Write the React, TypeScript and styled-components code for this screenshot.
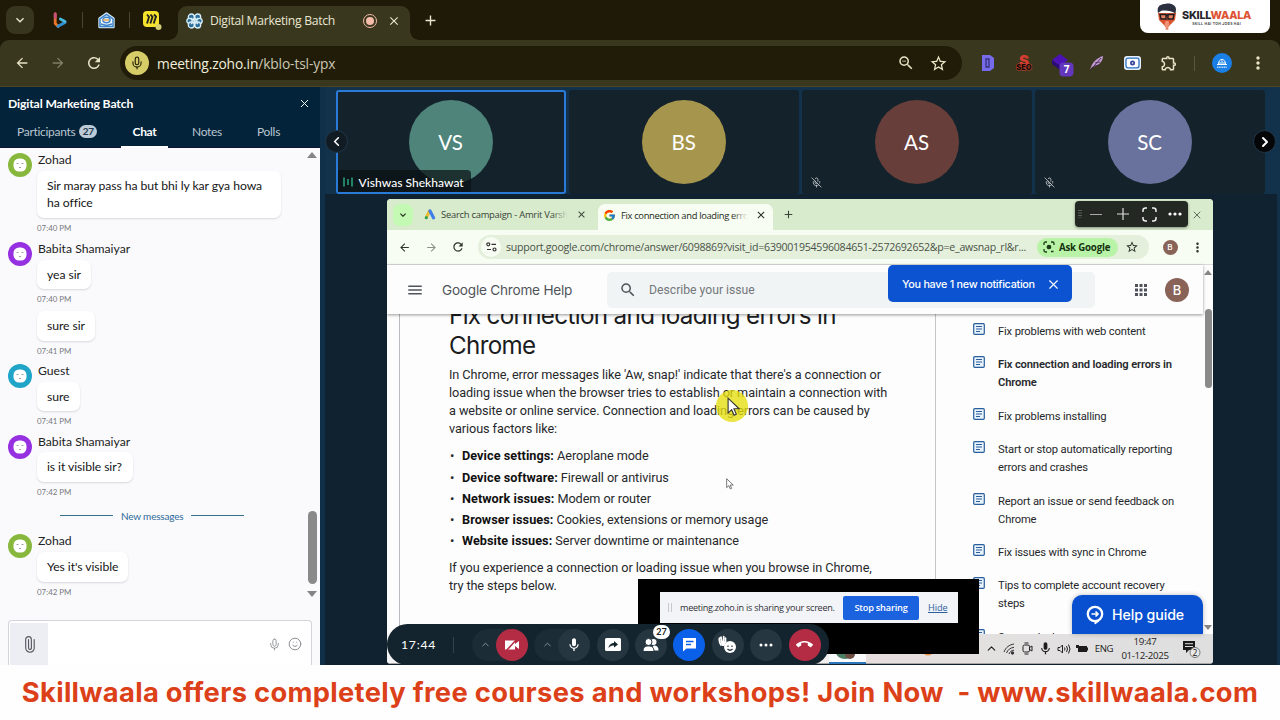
import React from "react";
import styled, { createGlobalStyle } from "styled-components";
import {
  MdMic, MdStarBorder, MdCallEnd, MdMoreVert, MdClose, MdAdd, MdRefresh, MdArrowBack,
  MdArrowForward, MdZoomOut, MdOutlineExtension, MdMenu, MdSearch, MdApps, MdExpandMore,
} from "react-icons/md";
import { FcGoogle } from "react-icons/fc";
import { Mic, MicOff, Smile, Paperclip, X, ChevronLeft, ChevronRight, ChevronUp } from "lucide-react";

const Global = createGlobalStyle`
  * { box-sizing: border-box; }
  body { margin: 0; overflow: hidden; background: #fff; }
  svg { display: block; flex: none; }
`;

const ui = `"Open Sans", "Noto Sans", sans-serif`;
const lato = `Lato, "Open Sans", sans-serif`;
const inter = `Inter, Roboto, sans-serif`;
const roboto = `Roboto, Inter, sans-serif`;

const Page = styled.div`
  position: relative;
  width: 1280px;
  height: 720px;
  display: flex;
  flex-direction: column;
  overflow: hidden;
  font-family: ${lato};
  background: #fff;
`;

const Slot = styled.div<{ $w: number; $ml?: number; $start?: boolean }>`
  flex: none;
  width: ${(p) => p.$w}px;
  margin-left: ${(p) => p.$ml ?? 0}px;
  display: flex;
  align-items: center;
  justify-content: ${(p) => (p.$start ? "flex-start" : "center")};
`;

const Label = styled.span<{ $size: number; $ls?: number; $weight?: number; $color?: string; $font?: string }>`
  font-family: ${(p) => p.$font ?? ui};
  font-size: ${(p) => p.$size}px;
  letter-spacing: ${(p) => p.$ls ?? 0}px;
  font-weight: ${(p) => p.$weight ?? 400};
  color: ${(p) => p.$color ?? "inherit"};
  white-space: nowrap;
`;

/* ---------- outer browser ---------- */
const TabStrip = styled.header`
  height: 40px;
  flex: none;
  display: flex;
  align-items: center;
  background: #1e1a07;
  color: #e9e6d0;
`;
const TabMenu = styled.div`
  width: 28px;
  height: 28px;
  margin-left: 6px;
  border-radius: 9px;
  background: #38351f;
  display: flex;
  align-items: center;
  justify-content: center;
`;
const Divider = styled.i<{ $ml: number; $h: number; $c: string }>`
  flex: none;
  width: 1px;
  height: ${(p) => p.$h}px;
  margin-left: ${(p) => p.$ml}px;
  background: ${(p) => p.$c};
`;
const MeetingTab = styled.div`
  position: relative;
  width: 232px;
  height: 34px;
  margin-left: 16px;
  align-self: flex-end;
  border-radius: 9px 9px 0 0;
  background: #3a371f;
  display: flex;
  align-items: center;
  padding-bottom: 5px;
  &::before, &::after {
    content: "";
    position: absolute;
    bottom: 0;
    width: 9px;
    height: 9px;
  }
  &::before { left: -9px; background: radial-gradient(circle at 0 0, transparent 8.5px, #3a371f 9px); }
  &::after { right: -9px; background: radial-gradient(circle at 100% 0, transparent 8.5px, #3a371f 9px); }
`;
const Record = styled.i`
  width: 14px;
  height: 14px;
  border: 1.5px solid #f0b9a4;
  border-radius: 50%;
  display: flex;
  align-items: center;
  justify-content: center;
  &::before { content: ""; width: 8px; height: 8px; border-radius: 50%; background: #f5bda9; }
`;
const AddressRow = styled.div`
  height: 47px;
  flex: none;
  background: #1e1a07;
`;
const AddressInner = styled.div`
  height: 47px;
  border-radius: 9px 9px 0 0;
  background: #3a371f;
  border-bottom: 1px solid #4a4525;
  display: flex;
  align-items: center;
  color: #e8e4c6;
`;
const Omnibox = styled.div`
  width: 842px;
  height: 34px;
  margin-left: 17px;
  border-radius: 17px;
  background: #201c08;
  display: flex;
  align-items: center;
`;
const MicDot = styled.div`
  width: 24px;
  height: 24px;
  margin: 0 8px 0 5px;
  border-radius: 50%;
  background: #d6cc68;
  color: #2a260c;
  display: flex;
  align-items: center;
  justify-content: center;
`;
const Url = styled.div` flex: 1; display: flex; color: #f0eedc; span + span { color: #cbc7b4; }`;
const ProfileDot = styled.div`
  width: 20px;
  height: 20px;
  border-radius: 50%;
  background: #1a80e6;
  display: flex;
  align-items: center;
  justify-content: center;
`;
const LogoCard = styled.div`
  position: absolute;
  top: 0;
  left: 1140px;
  width: 130px;
  height: 33px;
  border-radius: 0 0 8px 8px;
  background: #fff;
  display: flex;
  align-items: center;
  padding-left: 17px;
  gap: 5px;
`;
const LogoText = styled.div`
  display: flex;
  flex-direction: column;
  align-items: center;
  font-family: ${inter};
  line-height: 1;
  padding-top: 5px;
  b { font-size: 10.8px; font-weight: 800; color: #26242b; letter-spacing: -0.25px; }
  b em { font-style: normal; color: #dd5233; }
  small { font-size: 3.4px; font-weight: 700; letter-spacing: 0.35px; color: #444; margin-top: 1px; white-space: nowrap; }
`;

/* ---------- meeting body ---------- */
const Body = styled.main`
  height: 578px;
  flex: none;
  display: flex;
`;
const ChatPanel = styled.aside`
  width: 320px;
  flex: none;
  display: flex;
  flex-direction: column;
  background: #fafafc;
`;
const ChatHead = styled.div`
  height: 61px;
  flex: none;
  background: #02233a;
  border-bottom: 1px solid #121232;
  color: #fff;
`;
const TitleRow = styled.div`
  height: 32px;
  display: flex;
  align-items: center;
  justify-content: space-between;
  padding: 0 9px 0 8px;
`;
const TabsRow = styled.nav`
  height: 29px;
  display: flex;
  color: #b9c6d0;
  font-size: 12px;
  padding-left: 17px;
`;
const Tab = styled.div<{ $active?: boolean; $w: number }>`
  width: ${(p) => p.$w}px;
  height: 29px;
  padding-bottom: 4px;
  display: flex;
  align-items: center;
  justify-content: ${(p) => (p.$active ? "center" : "flex-start")};
  gap: 4px;
  box-shadow: ${(p) => (p.$active ? "inset 0 -2px #fff" : "none")};
  color: ${(p) => (p.$active ? "#fff" : "inherit")};
  font-weight: ${(p) => (p.$active ? 700 : 400)};
  letter-spacing: -0.3px;
`;
const Count = styled.b`
  width: 18px;
  height: 13px;
  border-radius: 7px;
  background: #bccbd6;
  color: #23384a;
  font-size: 10px;
  line-height: 13px;
  text-align: center;
`;
const ChatScroll = styled.div`
  flex: 1;
  display: flex;
  justify-content: space-between;
`;
const Messages = styled.div`
  width: 300px;
  padding: 5px 0 0 8px;
`;
const Group = styled.section<{ $h: number }>`
  height: ${(p) => p.$h}px;
  display: flex;
  gap: 5px;
`;
const Face = styled.div<{ $c: string }>`
  width: 24px;
  height: 24px;
  border-radius: 50%;
  flex: none;
  background: ${(p) => p.$c};
  display: flex;
  align-items: center;
  justify-content: center;
`;
const GroupBody = styled.div` display: flex; flex-direction: column; align-items: flex-start; `;
const Name = styled.div`
  height: 18px;
  line-height: 13px;
  padding-left: 1px;
  font-size: 12.2px;
  color: #222;
`;
const Bubble = styled.div<{ $w: number; $h: number }>`
  width: ${(p) => p.$w}px;
  height: ${(p) => p.$h}px;
  display: flex;
  align-items: center;
  padding: 0 0 1px 10px;
  background: #fff;
  border-radius: 7px;
  box-shadow: 0 1px 2px rgba(40, 40, 60, 0.16);
  font-size: 12.2px;
  letter-spacing: -0.07px;
  line-height: 17px;
  color: #161616;
  white-space: pre;
`;
const Time = styled.div`
  height: 22px;
  line-height: 21px;
  font-size: 7.9px;
  color: #77787c;
`;
const NewLine = styled.div`
  height: 31px;
  margin-left: 52px;
  display: flex;
  align-items: center;
  gap: 8px;
  color: #2c6a9a;
  font-size: 10px;
  letter-spacing: -0.2px;
  padding-bottom: 6px;
  &::before, &::after { content: ""; width: 53px; height: 1px; background: #35708f; }
`;
const Rail = styled.div`
  width: 16px;
  display: flex;
  flex-direction: column;
  align-items: center;
`;
const Arrow = styled.i<{ $down?: boolean; $s: number; $mt: number }>`
  margin-top: ${(p) => p.$mt}px;
  border: ${(p) => p.$s}px solid transparent;
  ${(p) => (p.$down ? "border-top" : "border-bottom")}: ${(p) => p.$s + 1}px solid #858585;
  ${(p) => (p.$down ? "border-bottom" : "border-top")}: 0;
`;
const Thumb = styled.i<{ $w: number; $h: number; $mt: number }>`
  width: ${(p) => p.$w}px;
  height: ${(p) => p.$h}px;
  margin-top: ${(p) => p.$mt}px;
  border-radius: 5px;
  background: #8a8a8a;
`;
const Composer = styled.div`
  height: 45px;
  margin: 0 8px;
  border: 1px solid #d3d5da;
  border-bottom: 0;
  border-radius: 4px 4px 0 0;
  background: #fff;
  display: flex;
  align-items: center;
  color: #8d8f94;
  padding: 2px 9px 0 1px;
  gap: 7px;
`;
const Attach = styled.div`
  width: 38px;
  height: 100%;
  margin-right: auto;
  background: #eceef4;
  color: #55585e;
  display: flex;
  align-items: center;
  justify-content: center;
`;

/* ---------- stage ---------- */
const Stage = styled.div`
  flex: 1;
  position: relative;
  display: flex;
  flex-direction: column;
  background: #10222f;
  border-left: 5px solid #103049;
  border-right: 3px solid #123049;
`;
const Strip = styled.div`
  height: 107px;
  flex: none;
  display: flex;
  gap: 3px;
  padding: 3px 0 1px 10.6px;
  margin: 0 -3px 0 0;
  background: #12314a;
`;
const Tile = styled.div<{ $on?: boolean }>`
  position: relative;
  width: 230px;
  height: 104px;
  border-radius: 3px;
  background: #14222c;
  border: ${(p) => (p.$on ? "2px solid #2a7bd8" : "0")};
  display: flex;
  align-items: center;
  justify-content: center;
  color: #cfd4d6;
`;
const Initials = styled.div<{ $c: string }>`
  width: 84px;
  height: 84px;
  border-radius: 50%;
  background: ${(p) => p.$c};
  color: #fff;
  font-size: 20.5px;
  display: flex;
  align-items: center;
  justify-content: center;
`;
const Muted = styled.div` position: absolute; left: 9px; bottom: 6px; `;
const NameTag = styled.div`
  position: absolute;
  left: 0;
  bottom: 0;
  width: 133px;
  height: 22px;
  background: rgba(10, 16, 20, 0.72);
  border-radius: 0 4px 0 0;
  display: flex;
  align-items: center;
  gap: 6px;
  padding: 2px 0 0 5px;
  color: #fff;
  font-size: 12px;
  font-weight: 500;
  letter-spacing: 0.03px;
`;
const Nav = styled.div<{ $x: number; $c: string }>`
  position: absolute;
  top: 43px;
  left: ${(p) => p.$x}px;
  width: 23px;
  height: 23px;
  border-radius: 50%;
  border: 1px solid #22384a;
  background: ${(p) => p.$c};
  color: #fff;
  display: flex;
  align-items: center;
  justify-content: center;
`;
const Share = styled.div`
  position: relative;
  width: 826px;
  height: 465px;
  margin: 5px 0 0 62px;
  border-radius: 4px;
  overflow: hidden;
  background: #fdfdfd;
  display: flex;
  flex-direction: column;
`;
const GTabs = styled.div`
  height: 31px;
  flex: none;
  display: flex;
  align-items: center;
  background: #d8ebcd;
  color: #3a4338;
`;
const GMenu = styled.div`
  width: 20px;
  height: 22px;
  margin-left: 6px;
  border-radius: 7px;
  background: #c3f9b2;
  color: #182016;
  display: flex;
  align-items: center;
  justify-content: center;
`;
const TabTitle = styled.div<{ $w: number; $ml: number; $bg: string }>`
  position: relative;
  width: ${(p) => p.$w}px;
  margin-left: ${(p) => p.$ml}px;
  overflow: hidden;
  display: flex;
  &::after {
    content: "";
    position: absolute;
    right: 0;
    top: 0;
    bottom: 0;
    width: 16px;
    background: linear-gradient(90deg, transparent, ${(p) => p.$bg});
  }
`;
const GTab = styled.div`
  width: 175px;
  height: 26px;
  margin-left: 11px;
  align-self: flex-end;
  border-radius: 7px 7px 0 0;
  background: #f7fdf2;
  display: flex;
  align-items: center;
  padding: 0 0 4px 5px;
  color: #242a22;
`;
const GBar = styled.div`
  height: 35px;
  flex: none;
  display: flex;
  align-items: center;
  background: #f7fdf2;
  border-bottom: 1px solid #d9dcd6;
  color: #2f352d;
`;
const GOmni = styled.div`
  width: 671px;
  height: 24px;
  margin-left: 13px;
  border-radius: 12px;
  background: #e4efdc;
  display: flex;
  align-items: center;
`;
const Tune = styled.div`
  width: 20px;
  height: 20px;
  margin: 0 5px 0 3px;
  border-radius: 50%;
  background: #f7fdf2;
  display: flex;
  align-items: center;
  justify-content: center;
`;
const AskPill = styled.div`
  width: 81px;
  height: 19px;
  margin-left: 10px;
  border-radius: 10px;
  background: #b9f3a7;
  color: #14330f;
  display: flex;
  align-items: center;
  gap: 4px;
  padding-left: 6px;
`;
const BAvatar = styled.div<{ $d: number }>`
  width: ${(p) => p.$d}px;
  height: ${(p) => p.$d}px;
  border-radius: 50%;
  background: #8a6358;
  color: #fff;
  font: 500 ${(p) => p.$d * 0.54}px ${inter};
  display: flex;
  align-items: center;
  justify-content: center;
`;
const View = styled.div` height: 369px; flex: none; display: flex; `;
const ViewMain = styled.div` width: 816px; display: flex; flex-direction: column; `;
const ViewRail = styled.div` width: 10px; display: flex; flex-direction: column; align-items: center; `;
const HelpHead = styled.div`
  position: relative;
  z-index: 1;
  height: 49px;
  flex: none;
  display: flex;
  align-items: center;
  background: #fdfdfd;
  box-shadow: 0 1px 3px rgba(0, 0, 0, 0.4);
  color: #50545a;
`;
const SearchBox = styled.div`
  width: 488px;
  height: 36px;
  margin-left: 35px;
  border-radius: 5px;
  background: #f1f4f4;
  display: flex;
  align-items: center;
  padding-left: 12px;
  gap: 12px;
`;
const Columns = styled.div`
  height: 320px;
  margin-left: 12px;
  display: flex;
  overflow: hidden;
  font-family: ${roboto};
  color: #26282b;
`;
const Article = styled.article`
  width: 537px;
  height: 340px;
  border-left: 1px solid #b9bcc0;
  border-right: 1px solid #c3c5c8;
  padding-left: 49px;
`;
const Heading = styled.h1`
  margin: -13.500px 0 0;
  font: 400 24.2px/30px ${inter};
  letter-spacing: -0.65px;
  color: #1b1c1e;
  white-space: pre;
`;
const Para = styled.p<{ $mt: number }>`
  margin: ${(p) => p.$mt}px 0 0;
  font-size: 12.7px;
  line-height: 18.1px;
  letter-spacing: -0.08px;
  white-space: pre;
`;
const Factors = styled.ul`
  list-style: none;
  margin: 7px 0 0;
  padding: 0;
  li { display: flex; font-size: 12.7px; height: 21.2px; line-height: 21.2px; white-space: pre; letter-spacing: -0.08px; }
  li::before { content: "•"; width: 12px; padding-left: 1px; font-size: 13px; }
  b { font-weight: 700; color: #111; letter-spacing: 0.05px; }
`;
const Devices = styled.div` margin: 29px 0 0 10px; font-size: 11px; color: #333; display: flex; gap: 26px; em { font-style: normal; color: #1a5fc8; }`;
const Related = styled.div`
  padding: 8px 0 0 37px;
  display: flex;
  flex-direction: column;
  gap: 15.4px;
`;
const RelatedItem = styled.div<{ $on?: boolean }>`
  display: flex;
  gap: 13px;
  font-size: 11.2px;
  letter-spacing: -0.15px;
  line-height: 18px;
  padding-top: 1px;
  margin-bottom: -1px;
  white-space: pre;
  font-weight: ${(p) => (p.$on ? 600 : 400)};
`;
const Taskbar = styled.div`
  height: 30px;
  flex: none;
  display: flex;
  align-items: center;
  background: linear-gradient(90deg, #f3f3f3 430px, #e6dedd 480px, #e3e0e0 600px, #dfdfe0);
  border-bottom: 1px solid #a6a6a6;
  color: #1c1c1c;
`;
const RunningApp = styled.div`
  width: 37px;
  height: 30px;
  margin-left: 442px;
  background: #f8fafb;
  border-bottom: 2px solid #2a76b8;
  overflow: hidden;
`;
const Clock = styled.div`
  width: 62px;
  display: flex;
  flex-direction: column;
  align-items: center;
  font: 9.7px/14px ${ui};
  letter-spacing: -0.33px;
`;

/* layers that float over the shared screen */
const Layer = styled.div<{ $x: number; $y: number; $w: number; $h: number }>`
  position: absolute;
  z-index: 2;
  left: ${(p) => p.$x}px;
  top: ${(p) => p.$y}px;
  width: ${(p) => p.$w}px;
  height: ${(p) => p.$h}px;
  display: flex;
  align-items: center;
`;
const ViewControls = styled(Layer)`
  background: #242823;
  border-radius: 4px;
  color: #e8e8e8;
  box-shadow: 0 1px 3px rgba(0, 0, 0, 0.4);
`;
const Toast = styled(Layer)`
  background: #0b53d0;
  border-radius: 5px;
  color: #fff;
  padding: 1px 0 0 14px;
`;
const HelpGuide = styled(Layer)`
  background: #0850cf;
  border-radius: 10px 10px 0 0;
  color: #fff;
  padding-left: 14px;
  gap: 8px;
  box-shadow: 0 0 5px rgba(0, 0, 0, 0.25);
`;
const SharingBlock = styled(Layer)` background: #000; align-items: flex-start; padding: 13px 0 0 22px; `;
const SharingBar = styled.div`
  width: 298px;
  height: 31px;
  background: #f3f4f8;
  display: flex;
  align-items: center;
`;
const StopButton = styled.div`
  width: 76px;
  height: 24px;
  margin: 0 9px 0 7px;
  border-radius: 2px;
  background: #1b62df;
  display: flex;
  align-items: center;
  justify-content: center;
`;
const Highlight = styled(Layer)` border-radius: 50%; background: rgba(229, 222, 12, 0.78); `;

const Controls = styled.div`
  position: absolute;
  z-index: 3;
  left: 62px;
  top: 537px;
  width: 442px;
  height: 41px;
  border-radius: 21px 20px 20px 21px;
  background: #14242e;
  display: flex;
  align-items: center;
  padding-left: 14px;
  color: #fff;
`;
const Ctl = styled.div<{ $c?: string }>`
  position: relative;
  width: 32px;
  height: 32px;
  flex: none;
  border-radius: 50%;
  background: ${(p) => p.$c ?? "#263640"};
  display: flex;
  align-items: center;
  justify-content: center;
`;
const Split = styled.div<{ $ml: number }>`
  width: 56px;
  height: 32px;
  flex: none;
  margin-left: ${(p) => p.$ml}px;
  border-radius: 16px;
  background: #1c2c36;
  display: flex;
  align-items: center;
  justify-content: space-between;
  padding-left: 8px;
  color: #aab4ba;
  ${Ctl} { color: #fff; }
`;
const CtlRow = styled.div` display: flex; gap: 6.4px; margin-left: 6.6px; `;
const Badge = styled.b`
  position: absolute;
  top: -4px;
  left: 18px;
  width: 17px;
  height: 14px;
  border-radius: 7px;
  background: #fff;
  color: #1b1b1b;
  font-size: 9px;
  line-height: 14px;
  text-align: center;
`;
const Banner = styled.footer`
  flex: 1;
  display: flex;
  align-items: center;
  justify-content: center;
  background: #fffefe;
  color: #dc4018;
  font: 700 27.3px ${inter};
  letter-spacing: 0.33px;
  white-space: pre;
`;

/* ---------- drawings ---------- */
const Bing = () => (
  <svg width="16" height="17" viewBox="0 0 16 17" fill="none">
    <path d="M3.200 2v9.500l3 3" stroke="#e8752b" strokeWidth="2.800" strokeLinecap="round" />
    <path d="M3.200 2v3.500" stroke="#c8507c" strokeWidth="2.800" strokeLinecap="round" />
    <path d="M6 14.300l7-3.800" stroke="#2f8fd0" strokeWidth="3" strokeLinecap="round" />
    <path d="M8.300 7l4.700 2.500" stroke="#48b9dd" strokeWidth="2.800" strokeLinecap="round" />
  </svg>
);
const MailIcon = () => (
  <svg width="17" height="17" viewBox="0 0 17 17" fill="#f2f8ff" stroke="#3d83c9" strokeWidth="1.500">
    <path d="M1.500 6.500 8.500 1.500l7 5v8.500h-14z" strokeLinejoin="round" stroke="#dcecf7" strokeWidth="2.400" />
    <path d="M2 6.800 8.500 2.300 15 6.800v7.700H2z" />
    <ellipse cx="8.500" cy="8" rx="3.600" ry="2.700" />
    <path d="M3 12l5.500 1.500L14 12" fill="none" />
    <path d="M5 8h6" stroke="#e8a64b" />
  </svg>
);
const Miro = () => (
  <svg width="20" height="20" viewBox="0 0 20 20">
    <rect x="1" y="1" width="16" height="16" rx="4" fill="#f7e22c" />
    <path d="M5 4.500l2 2.500-2 6.500M8.500 4.500l2 2.500-2.200 6.500M12 4.500l2 2-2.300 7" fill="none" stroke="#222" strokeWidth="1.900" />
    <circle cx="16.500" cy="17" r="3" fill="#d8d071" />
  </svg>
);
const Knot = () => (
  <svg width="17" height="16" viewBox="0 0 17 16" fill="#2d6d99" stroke="#d7edf7" strokeWidth="1.300">
    <circle cx="5.300" cy="4" r="3" /><circle cx="11.700" cy="4" r="3" />
    <circle cx="3.500" cy="8" r="2.700" /><circle cx="13.500" cy="8" r="2.700" />
    <circle cx="5.300" cy="12" r="3" /><circle cx="11.700" cy="12" r="3" />
    <path d="M8.500 2v12M5 5l7 6M12 5l-7 6" />
  </svg>
);
const FaceIcon = () => (
  <svg width="14" height="14" viewBox="0 0 14 14">
    <rect x=".5" y=".5" width="13" height="13" rx="5.500" fill="#fff" />
    <path d="M3.500 5.500h2M8.500 5.500h2M6 9.500h2" stroke="#999" strokeWidth=".9" fill="none" />
  </svg>
);
const Mascot = () => (
  <svg width="20" height="27" viewBox="0 0 20 27">
    <path d="M1 10h18l-1 7-5 5-3 4-3-4-5-5z" fill="#d9532f" />
    <path d="M1 10C-.5 4 3 1 8 1c6-1.500 11 1.500 11 5.500l-.5 4C15 8 8 7 4 8z" fill="#2c3141" />
    <path d="M3 11.500h6v4.500H4zM11 11.500h6L16 16h-5zM9 12.500h2" fill="#e9825e" stroke="#1c1c25" strokeWidth="1.400" />
    <path d="M8.500 18l-1 4 2.500 4 2.500-4-1-4z" fill="#ee9275" />
    <path d="M8.500 26h3" stroke="#d9532f" />
  </svg>
);
const ArticleIcon = () => (
  <svg width="12" height="12" viewBox="0 0 12 12" fill="none" stroke="#285f9c" strokeWidth="1.200">
    <rect x=".7" y=".7" width="10.600" height="10.600" rx="1" fill="#eaf2fb" />
    <path d="M3 3.500h6M3 6h6M3 8.500h4" />
  </svg>
);
const AdsIcon = () => (
  <svg width="12" height="11" viewBox="0 0 12 11" fill="none" strokeLinecap="round">
    <path d="M5.500 2 2.500 8" stroke="#eebb2a" strokeWidth="3" />
    <path d="M6 2l3.500 6.800" stroke="#3f7fe8" strokeWidth="3.200" />
    <circle cx="2.300" cy="8.700" r="1.600" fill="#35a155" />
  </svg>
);
const Pointer = ({ size }: { size: number }) => (
  <svg width={size * 0.66} height={size} viewBox="0 0 12 18" fill="#fff" stroke="#333" strokeWidth="1">
    <path d="M1 1v13.500l3.200-3 2.300 5 2-.9-2.200-5H11z" />
  </svg>
);

const chat = [
  { h: 89, name: "Zohad", c: "#87b83d", items: [{ t: "Sir maray pass ha but bhi ly kar gya howa\nha office", w: 244, h: 47, at: "07:40 PM" }] },
  { h: 122, name: "Babita Shamaiyar", c: "#9531e0", items: [{ t: "yea sir", w: 54, h: 29, at: "07:40 PM" }, { t: "sure sir", w: 58, h: 30, at: "07:41 PM" }] },
  { h: 71, name: "Guest", c: "#20a4c8", items: [{ t: "sure", w: 43, h: 29, at: "07:41 PM" }] },
  { h: 68, name: "Babita Shamaiyar", c: "#9531e0", items: [{ t: "is it visible sir?", w: 96, h: 30, at: "07:42 PM" }] },
];
const factors = [
  ["Device settings:", "Aeroplane mode"],
  ["Device software:", "Firewall or antivirus"],
  ["Network issues:", "Modem or router"],
  ["Browser issues:", "Cookies, extensions or memory usage"],
  ["Website issues:", "Server downtime or maintenance"],
];
const related = [
  "Fix problems with web content",
  "Fix connection and loading errors in\nChrome",
  "Fix problems installing",
  "Start or stop automatically reporting\nerrors and crashes",
  "Report an issue or send feedback on\nChrome",
  "Fix issues with sync in Chrome",
  "Tips to complete account recovery\nsteps",
  "Secure deployment",
];

type Msg = { t: string; w: number; h: number; at: string };
const ChatGroup = ({ h, name, c, items }: { h: number; name: string; c: string; items: Msg[] }) => (
  <Group $h={h}>
    <Face $c={c}><FaceIcon /></Face>
    <GroupBody>
      <Name>{name}</Name>
      {items.map((m) => (
        <React.Fragment key={m.t}>
          <Bubble $w={m.w} $h={m.h}>{m.t}</Bubble>
          <Time>{m.at}</Time>
        </React.Fragment>
      ))}
    </GroupBody>
  </Group>
);

const BrowserTop = () => (
  <>
    <TabStrip>
      <TabMenu><MdExpandMore size={16} /></TabMenu>
      <Slot $w={18} $ml={17}><Bing /></Slot>
      <Divider $ml={13} $h={16} $c="#4a4630" />
      <Slot $w={18} $ml={14}><MailIcon /></Slot>
      <Divider $ml={14} $h={16} $c="#4a4630" />
      <Slot $w={20} $ml={12}><Miro /></Slot>
      <MeetingTab>
        <Slot $w={18} $ml={7}><Knot /></Slot>
        <Slot $w={127} $ml={7} $start><Label $size={12.2} $ls={-0.3}>Digital Marketing Batch</Label></Slot>
        <Slot $w={16} $ml={25}><Record /></Slot>
        <Slot $w={16} $ml={8}><MdClose size={14} /></Slot>
      </MeetingTab>
      <Slot $w={18} $ml={11}><MdAdd size={17} /></Slot>
    </TabStrip>
    <AddressRow>
      <AddressInner>
        <Slot $w={18} $ml={13}><MdArrowBack size={16} /></Slot>
        <Slot $w={18} $ml={18}><MdArrowForward size={16} color="#827e68" /></Slot>
        <Slot $w={18} $ml={18}><MdRefresh size={18} /></Slot>
        <Omnibox>
          <MicDot><Mic size={14} /></MicDot>
          <Url><Label $size={13.8} $ls={-0.14}>meeting.zoho.in</Label><Label $size={13.8} $ls={-0.14}>/kblo-tsl-ypx</Label></Url>
          <MdZoomOut size={18} />
          <Slot $w={20} $ml={13}><MdStarBorder size={19} /></Slot>
          <Slot $w={14} />
        </Omnibox>
        <Slot $w={16} $ml={18}>
          <svg width="14" height="16" viewBox="0 0 14 16"><path d="M1 0h8l4 3v10l-4 3H1z" fill="#766bea" /><path d="M5 4h3v8H5z" fill="none" stroke="#35327a" strokeWidth="1.300" /></svg>
        </Slot>
        <Slot $w={18} $ml={19}>
          <svg width="18" height="18" viewBox="0 0 18 18">
            <text x="9" y="11.500" textAnchor="middle" fontFamily="Inter" fontWeight="900" fontSize="15" fill="#d63c30">S</text>
            <text x="9" y="16" textAnchor="middle" fontFamily="Inter" fontWeight="900" fontSize="7.500" fill="#160d06" stroke="#d63c30" strokeWidth="1" paintOrder="stroke">SEO</text>
          </svg>
        </Slot>
        <Slot $w={24} $ml={18}>
          <svg width="24" height="28" viewBox="0 0 24 28">
            <path d="M1 11l8-6 8 6-8 6z" fill="#4c12b4" /><path d="M1 11l8 6v4l-8-6z" fill="#2c0b78" />
            <rect x="8.500" y="13.500" width="14" height="14" rx="4" fill="#6337bd" />
            <text x="15.500" y="24.300" textAnchor="middle" fontFamily="Open Sans" fontWeight="700" fontSize="10" fill="#fff">7</text>
          </svg>
        </Slot>
        <Slot $w={18} $ml={12}>
          <svg width="15" height="16" viewBox="0 0 15 16"><path d="M1 15C3 7 8 3 14 1c0 5-4 10-11 11z" fill="#c29ad6" /><path d="M1 15.500 12 3M5 11l5-1M6 8l5-1" stroke="#3a2340" strokeWidth=".8" /></svg>
        </Slot>
        <Slot $w={18} $ml={18}>
          <svg width="17" height="14" viewBox="0 0 17 14"><rect width="17" height="14" rx="3" fill="#e6f1fb" /><rect x="2" y="2.200" width="13" height="9.600" rx="2" fill="#fff" stroke="#2a6fc4" strokeWidth="1.300" /><circle cx="8.500" cy="7" r="2.500" fill="#35469e" /><circle cx="8.500" cy="7" r=".8" fill="#fff" /></svg>
        </Slot>
        <Slot $w={20} $ml={18}><MdOutlineExtension size={18} /></Slot>
        <Divider $ml={15} $h={15} $c="#5b573d" />
        <Slot $w={20} $ml={17}>
          <ProfileDot>
            <svg width="14" height="13" viewBox="0 0 14 13" fill="none" stroke="#fff"><path d="M3.500 7C3.500 1 10.500 1 10.500 7" /><path d="M5 7V5M7 7V3.500M9 7V5M2 7.500h10" /><path d="M2 10.200h10" strokeWidth="1.400" strokeDasharray="1.200 .5" opacity=".7" /></svg>
          </ProfileDot>
        </Slot>
        <Slot $w={20} $ml={16}><MdMoreVert size={20} /></Slot>
      </AddressInner>
    </AddressRow>
    <LogoCard>
      <Mascot />
      <LogoText><b>SKILL<em>WAALA</em></b><small>SKILL HAI TOH JOBS HAI</small></LogoText>
    </LogoCard>
  </>
);

const Chat = () => (
  <ChatPanel>
    <ChatHead>
      <TitleRow><Label $font={lato} $size={12.2} $weight={700} $ls={-0.14}>Digital Marketing Batch</Label><X size={13} strokeWidth={1.8} /></TitleRow>
      <TabsRow>
        <Tab $w={104}>Participants <Count>27</Count></Tab>
        <Tab $w={47} $active>Chat</Tab>
        <Slot $w={24} />
        <Tab $w={65}>Notes</Tab>
        <Tab $w={30}>Polls</Tab>
      </TabsRow>
    </ChatHead>
    <ChatScroll>
      <Messages>
        {chat.map((g, i) => <ChatGroup key={i} {...g} />)}
        <NewLine>New messages</NewLine>
        <ChatGroup h={70} name="Zohad" c="#87b83d" items={[{ t: "Yes it's visible", w: 91, h: 30, at: "07:42 PM" }]} />
      </Messages>
      <Rail>
        <Arrow $s={5} $mt={4} />
        <Thumb $w={9} $h={73} $mt={353} />
        <Arrow $s={5} $mt={7} $down />
      </Rail>
    </ChatScroll>
    <Composer>
      <Attach><Paperclip size={17} strokeWidth={1.6} transform="rotate(-45)" /></Attach>
      <Mic size={13} strokeWidth={1.7} />
      <Smile size={14} strokeWidth={1.7} />
    </Composer>
  </ChatPanel>
);

const Participants = () => (
  <Strip>
    <Tile $on>
      <Initials $c="#4e8479">VS</Initials>
      <NameTag>
        <svg width="10" height="10" viewBox="0 0 10 10" stroke="#28a77e" strokeWidth="1.500"><path d="M1 .5v9M5 2v6M9 .5v9" /></svg>
        Vishwas Shekhawat
      </NameTag>
    </Tile>
    <Tile><Initials $c="#a6954d">BS</Initials></Tile>
    <Tile><Initials $c="#673e39">AS</Initials><Muted><MicOff size={11} strokeWidth={1.7} /></Muted></Tile>
    <Tile><Initials $c="#68729c">SC</Initials><Muted><MicOff size={11} strokeWidth={1.7} /></Muted></Tile>
    <Nav $x={0} $c="#111b24"><ChevronLeft size={15} strokeWidth={2.6} /></Nav>
    <Nav $x={928} $c="#050608"><ChevronRight size={16} strokeWidth={3} /></Nav>
  </Strip>
);

const SharedScreen = () => (
  <Share>
    <GTabs>
      <GMenu><MdExpandMore size={12} /></GMenu>
      <Slot $w={14} $ml={10}><AdsIcon /></Slot>
      <TabTitle $w={127} $ml={4} $bg="#d8ebcd"><Label $size={9.4} $ls={-0.24}>Search campaign - Amrit Varsha</Label></TabTitle>
      <Slot $w={12} $ml={7}><MdClose size={11} /></Slot>
      <GTab>
        <FcGoogle size={13} />
        <TabTitle $w={127} $ml={5} $bg="#f7fdf2"><Label $size={9.4} $ls={-0.34}>Fix connection and loading errors</Label></TabTitle>
        <Slot $w={12} $ml={7}><MdClose size={12} /></Slot>
      </GTab>
      <Slot $w={14} $ml={8}><MdAdd size={13} /></Slot>
      <Slot $w={14} $ml={395}><X size={12} strokeWidth={1.5} /></Slot>
    </GTabs>
    <GBar>
      <Slot $w={14} $ml={10}><MdArrowBack size={13} /></Slot>
      <Slot $w={14} $ml={13}><MdArrowForward size={13} color="#8a9186" /></Slot>
      <Slot $w={14} $ml={13}><MdRefresh size={14} /></Slot>
      <GOmni>
        <Tune>
          <svg width="11" height="10" viewBox="0 0 11 10" fill="none" stroke="#333" strokeWidth="1.200"><circle cx="2.300" cy="2.300" r="1.500" /><path d="M5.500 2.300H10M1 7.500h4" /><circle cx="8.500" cy="7.500" r="1.500" /></svg>
        </Tune>
        <Slot $w={521} $start><Label $size={10.6} $ls={-0.25} $color="#4a5347">support.google.com/chrome/answer/6098869?visit_id=639001954596084651-2572692652&p=e_awsnap_rl&r...</Label></Slot>
        <AskPill>
          <svg width="12" height="12" viewBox="0 0 12 12" fill="none" stroke="#1c3a17" strokeWidth="1.300"><path d="M1 4V2.500Q1 1 2.500 1H4M8 1h1.500Q11 1 11 2.500V4M1 8v1.500Q1 11 2.500 11H4M8 10.500h2.500" /><circle cx="6" cy="6" r="1.700" fill="#1c3a17" /></svg>
          <Label $size={9.7} $weight={700} $ls={-0.2}>Ask Google</Label>
        </AskPill>
        <Slot $w={14} $ml={7}><MdStarBorder size={14} /></Slot>
      </GOmni>
      <Slot $w={16} $ml={13}><BAvatar $d={15}>B</BAvatar></Slot>
      <Slot $w={16} $ml={11}><MdMoreVert size={15} /></Slot>
    </GBar>
    <View>
      <ViewMain>
        <HelpHead>
          <Slot $w={18} $ml={19}><MdMenu size={18} /></Slot>
          <Slot $w={130} $ml={18} $start><Label $font={inter} $size={13.6} $ls={-0.22}>Google Chrome Help</Label></Slot>
          <SearchBox><MdSearch size={18} /><Label $font={roboto} $size={12.2} $ls={0} $color="#74787c">Describe your issue</Label></SearchBox>
          <Slot $w={18} $ml={37}><MdApps size={18} /></Slot>
          <Slot $w={24} $ml={15}><BAvatar $d={24}>B</BAvatar></Slot>
        </HelpHead>
        <Columns>
          <Article>
            <Heading>{"Fix connection and loading errors in\nChrome"}</Heading>
            <Para $mt={5.5}>{"In Chrome, error messages like 'Aw, snap!' indicate that there's a connection or\nloading issue when the browser tries to establish or maintain a connection with\na website or online service. Connection and loading errors can be caused by\nvarious factors like:"}</Para>
            <Factors>{factors.map(([k, v]) => <li key={k}><b>{k}</b>{" " + v}</li>)}</Factors>
            <Para $mt={8}>{"If you experience a connection or loading issue when you browse in Chrome,\ntry the steps below."}</Para>
            <Devices><em>Computer</em><span>Android</span><span>iPhone</span></Devices>
          </Article>
          <Related>
            {related.map((t, i) => <RelatedItem key={t} $on={i === 1}><ArticleIcon />{t}</RelatedItem>)}
          </Related>
        </Columns>
      </ViewMain>
      <ViewRail>
        <Arrow $s={4} $mt={5} />
        <Thumb $w={7} $h={79} $mt={34} />
        <Arrow $s={4} $mt={237} $down />
      </ViewRail>
    </View>
    <Taskbar>
      <RunningApp>
        <svg width="37" height="30" viewBox="0 0 37 30"><ellipse cx="16" cy="18" rx="9" ry="7" fill="#4b7d63" /><circle cx="21" cy="20" r="5" fill="#6e4c42" /></svg>
      </RunningApp>
      <Slot $w={16} $ml={54}><svg width="12" height="30" viewBox="0 0 12 30"><circle cx="6" cy="16" r="5.500" fill="#e8924a" /></svg></Slot>
      <Slot $w={14} $ml={48}><ChevronUp size={13} strokeWidth={2} /></Slot>
      <Slot $w={14} $ml={4}><svg width="12" height="12" viewBox="0 0 12 12" fill="none" stroke="#333"><path d="M1 9C3 4 6 2 11 1M3.500 10C5 6.500 7 5 11 4.300M6 11c1-2.500 2.500-3.500 5-3.800" /><circle cx="9.500" cy="10" r="1.200" fill="#333" /></svg></Slot>
      <Slot $w={14} $ml={4}><svg width="11" height="13" viewBox="0 0 11 13" fill="none" stroke="#222"><rect x="1" y="3" width="6.500" height="7" rx="1.500" /><path d="M7.500 5.500 10 4v5L7.500 7.500M2.500 1h4M2.500 12h4" /></svg></Slot>
      <Slot $w={14} $ml={4}><MdMic size={15} /></Slot>
      <Slot $w={16} $ml={4}><svg width="14" height="12" viewBox="0 0 14 12" fill="none" stroke="#222"><path d="M1 4.500h2L5.500 2v8L3 7.500H1zM7.500 4.500q1 1.500 0 3M9.500 3q2 3 0 6M11.500 1.500q3 4.500 0 9" /></svg></Slot>
      <Slot $w={14} $ml={2}><svg width="13" height="9" viewBox="0 0 13 9"><path d="M1 1h3v1h8v1.500h1v3h-1V8H3V4H1z" fill="#1d1d1d" /></svg></Slot>
      <Slot $w={20} $ml={6}><Label $size={9.6} $ls={-0.35}>ENG</Label></Slot>
      <Slot $w={62} $ml={0}><Clock><span>19:47</span><span>01-12-2025</span></Clock></Slot>
      <Slot $w={22} $ml={5}>
        <svg width="20" height="20" viewBox="0 0 20 20"><path d="M1 2h12v9H7l-3 3v-3H1z" fill="#1b1b1b" /><path d="M3 4.700h8M3 7.500h8" stroke="#ddd" /><circle cx="13" cy="13.500" r="5" fill="#e8e8e8" stroke="#777" /><text x="13" y="16.500" textAnchor="middle" fontFamily="Open Sans" fontSize="8.500" fill="#111">2</text></svg>
      </Slot>
    </Taskbar>

    <ViewControls $x={688} $y={2} $w={113} $h={26}>
      <Slot $w={9}><svg width="4" height="10" viewBox="0 0 4 10" stroke="#8d8d8d" strokeDasharray="1 1.500"><path d="M1 1v8M3 1v8" /></svg></Slot>
      <Slot $w={12} $ml={6}><svg width="12" height="12" viewBox="0 0 12 12" stroke="#aaa"><path d="M0 6.500h12" /></svg></Slot>
      <Slot $w={12} $ml={15}><svg width="12" height="12" viewBox="0 0 12 12" stroke="#ddd" strokeWidth="1.200"><path d="M0 6h12M6 0v12" /></svg></Slot>
      <Slot $w={16} $ml={12}><svg width="15" height="15" viewBox="0 0 15 15" fill="none" stroke="#eee" strokeWidth="1.500"><path d="M1 5V3.500Q1 1 3.500 1H5M10 1h1.500Q14 1 14 3.500V5M14 10v1.500Q14 14 11.500 14H10M5 14H3.500Q1 14 1 11.500V10" /></svg></Slot>
      <Slot $w={16} $ml={10}><svg width="14" height="4" viewBox="0 0 14 4" fill="#fff"><circle cx="2" cy="2" r="1.600" /><circle cx="7" cy="2" r="1.600" /><circle cx="12" cy="2" r="1.600" /></svg></Slot>
    </ViewControls>
    <Toast $x={501} $y={66} $w={184} $h={37}>
      <Slot $w={134} $start><Label $font={inter} $size={10.8} $weight={500} $ls={-0.27}>You have 1 new notification</Label></Slot>
      <Slot $w={14} $ml={10}><X size={15} strokeWidth={1.8} /></Slot>
    </Toast>
    <Highlight $x={329} $y={191} $w={32} $h={32} />
    <Layer $x={340} $y={198} $w={13} $h={20}><Pointer size={20} /></Layer>
    <Layer $x={339} $y={279} $w={8} $h={12}><Pointer size={12} /></Layer>
    <HelpGuide $x={685} $y={396} $w={131} $h={39}>
      <svg width="18" height="20" viewBox="0 0 18 20" fill="none" stroke="#fff"><circle cx="9" cy="9" r="7.200" strokeWidth="2.300" /><path d="M5.500 9h6M9.500 6.500 12 9l-2.500 2.500" strokeWidth="1.700" /><path d="M9 16v3l4-3" fill="#fff" /></svg>
      <Label $font={inter} $size={14.2} $weight={500} $ls={-0.1}>Help guide</Label>
    </HelpGuide>
    <SharingBlock $x={251} $y={380} $w={341} $h={75}>
      <SharingBar>
        <Slot $w={4} $ml={8}><svg width="4" height="9" viewBox="0 0 4 9" stroke="#c6c8cc"><path d="M.5 0v9M3.500 0v9" /></svg></Slot>
        <Slot $w={156} $ml={8} $start><Label $size={9.1} $ls={-0.28} $color="#303236">meeting.zoho.in is sharing your screen.</Label></Slot>
        <StopButton><Label $size={9.2} $weight={600} $ls={-0.2} $color="#fff">Stop sharing</Label></StopButton>
        <Label $size={9.2} $ls={-0.1} $color="#2a5f9c"><u>Hide</u></Label>
      </SharingBar>
    </SharingBlock>
  </Share>
);

const MeetingControls = () => (
  <Controls>
    <Slot $w={37} $start><Label $font={lato} $size={12.2} $ls={0.75}>17:44</Label></Slot>
    <Slot $w={1} $ml={15}><Divider $ml={0} $h={16} $c="#33424c" /></Slot>
    <Split $ml={18}>
      <ChevronUp size={11} strokeWidth={1.6} />
      <Ctl $c="#b32c44"><svg width="16" height="14" viewBox="0 0 16 14"><path d="M1 2.500h10V6l4-3v8l-4-3v3.500H1z" fill="#fff" /><path d="M1.500 13.500 13 1" stroke="#b32c44" strokeWidth="1.500" /></svg></Ctl>
    </Split>
    <Split $ml={6}><ChevronUp size={11} strokeWidth={1.6} /><Ctl><MdMic size={16} /></Ctl></Split>
    <CtlRow>
      <Ctl><svg width="16" height="13" viewBox="0 0 16 13"><rect width="16" height="13" rx="1.500" fill="#fff" /><path d="M3.500 10C4 6.500 6.500 5 9 5V3l4 3.500L9 9.500v-2C7 7.500 5 8 3.500 10z" fill="#15242c" /></svg></Ctl>
      <Ctl>
        <svg width="16" height="14" viewBox="0 0 16 14" fill="#fff"><circle cx="10.500" cy="4" r="3" /><path d="M8 12.500h7.500c0-4-2-5-5-5z" /><circle cx="5.500" cy="4" r="3.500" stroke="#263640" /><path d="M0 13.500c0-4.500 2.500-5.500 5.500-5.500S11 9 11 13.500z" stroke="#263640" /></svg>
        <Badge>27</Badge>
      </Ctl>
      <Ctl $c="#0b60ea"><svg width="15" height="15" viewBox="0 0 15 15"><path d="M1 1h13v10.500H4.500L1 14.500z" fill="#fff" /><path d="M4 4.500h7.500M4 7.500h5" stroke="#0b60ea" strokeWidth="1.300" /></svg></Ctl>
      <Ctl>
        <svg width="19" height="19" viewBox="0 0 19 19"><circle cx="12" cy="12" r="6" fill="#fff" /><path d="M10 10.500v1.500M14 10.500v1.500M9.500 14q2.500 2.500 5 0" stroke="#263640" strokeWidth="1.200" fill="none" /><path d="M3 10C1 7 1 5 1.500 3M3.500 6 3 2M5.500 6l.2-4.500M7.500 6.500V3" stroke="#fff" strokeWidth="1.700" strokeLinecap="round" fill="none" /><path d="M2 5.500l6.500 1L6 11H4z" fill="#fff" /></svg>
      </Ctl>
      <Ctl><svg width="14" height="4" viewBox="0 0 14 4" fill="#fff"><circle cx="2" cy="2" r="1.500" /><circle cx="7" cy="2" r="1.500" /><circle cx="12" cy="2" r="1.500" /></svg></Ctl>
      <Ctl $c="#b32c44"><MdCallEnd size={17} /></Ctl>
    </CtlRow>
  </Controls>
);

export default function App() {
  return (
    <Page>
      <Global />
      <BrowserTop />
      <Body>
        <Chat />
        <Stage>
          <Participants />
          <SharedScreen />
          <MeetingControls />
        </Stage>
      </Body>
      <Banner>Skillwaala offers completely free courses and workshops! Join Now  - www.skillwaala.com</Banner>
    </Page>
  );
}
